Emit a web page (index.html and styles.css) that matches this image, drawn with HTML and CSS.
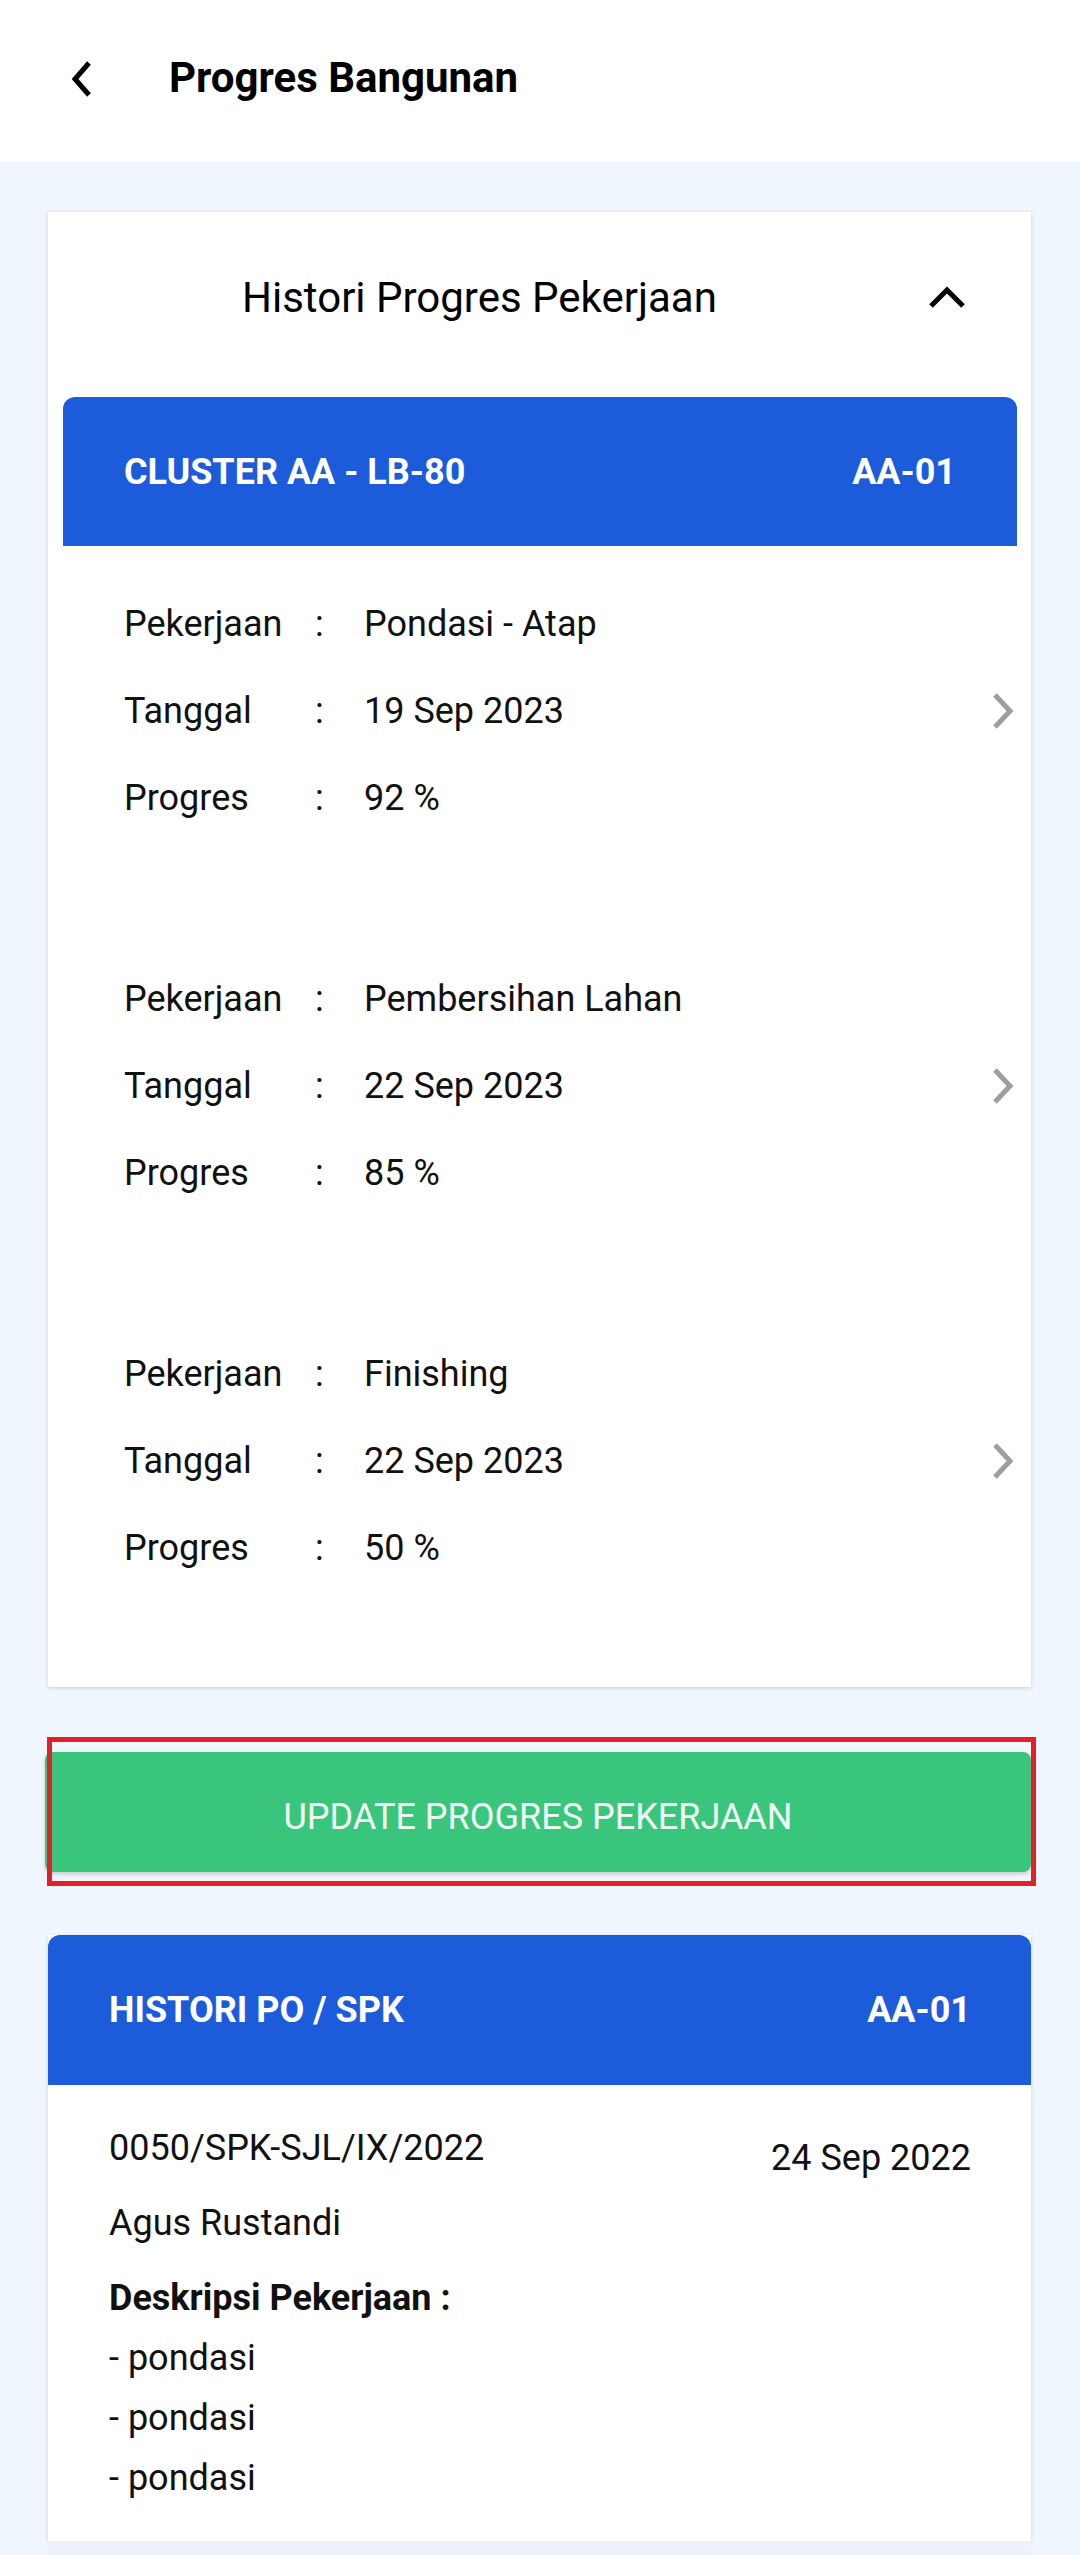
FILE: index.html
```html
<!DOCTYPE html>
<html lang="id">
<head>
<meta charset="utf-8">
<title>Progres Bangunan</title>
<link rel="stylesheet" href="styles.css">
</head>
<body>
<header class="topbar">
  <svg class="back" width="24" height="38" viewBox="0 0 24 38"><path d="M19 3 L5 19 L19 35" fill="none" stroke="#000" stroke-width="5"/></svg>
  <h1 class="page-title">Progres Bangunan</h1>
</header>

<main class="content">
  <section class="card history">
    <div class="history-head">
      <h2 class="history-title">Histori Progres Pekerjaan</h2>
      <svg class="chev-up" width="38" height="24" viewBox="0 0 38 24"><path d="M3 20 L19 4 L35 20" fill="none" stroke="#000" stroke-width="5"/></svg>
    </div>
    <div class="blue-head inset">
      <span>CLUSTER AA - LB-80</span>
      <span>AA-01</span>
    </div>
    <div class="groups">
      <div class="group">
        <div class="rows">
          <span>Pekerjaan</span><span>:</span><span>Pondasi - Atap</span>
          <span>Tanggal</span><span>:</span><span>19 Sep 2023</span>
          <span>Progres</span><span>:</span><span>92 %</span>
        </div>
        <svg class="chev-right" width="24" height="38" viewBox="0 0 24 38"><path d="M4 3 L19 19 L4 35" fill="none" stroke="#9e9e9e" stroke-width="5"/></svg>
      </div>
      <div class="group">
        <div class="rows">
          <span>Pekerjaan</span><span>:</span><span>Pembersihan Lahan</span>
          <span>Tanggal</span><span>:</span><span>22 Sep 2023</span>
          <span>Progres</span><span>:</span><span>85 %</span>
        </div>
        <svg class="chev-right" width="24" height="38" viewBox="0 0 24 38"><path d="M4 3 L19 19 L4 35" fill="none" stroke="#9e9e9e" stroke-width="5"/></svg>
      </div>
      <div class="group">
        <div class="rows">
          <span>Pekerjaan</span><span>:</span><span>Finishing</span>
          <span>Tanggal</span><span>:</span><span>22 Sep 2023</span>
          <span>Progres</span><span>:</span><span>50 %</span>
        </div>
        <svg class="chev-right" width="24" height="38" viewBox="0 0 24 38"><path d="M4 3 L19 19 L4 35" fill="none" stroke="#9e9e9e" stroke-width="5"/></svg>
      </div>
    </div>
  </section>

  <div class="btn-wrap">
    <button class="btn-update">UPDATE PROGRES PEKERJAAN</button>
  </div>

  <section class="card po">
    <div class="blue-head po-head">
      <span>HISTORI PO / SPK</span>
      <span>AA-01</span>
    </div>
    <div class="po-body">
      <div class="po-top">
        <span>0050/SPK-SJL/IX/2022</span>
        <span class="po-date">24 Sep 2022</span>
      </div>
      <div class="po-line gap">Agus Rustandi</div>
      <div class="po-line gap bold">Deskripsi Pekerjaan :</div>
      <div class="po-line">- pondasi</div>
      <div class="po-line">- pondasi</div>
      <div class="po-line">- pondasi</div>
    </div>
  </section>
  <div class="po-tail"></div>
</main>
</body>
</html>
```

FILE: styles.css
```css
* { box-sizing: border-box; }
html, body { margin: 0; padding: 0; }
body {
  width: 1080px;
  min-height: 2555px;
  background: #f0f6fd;
  font-family: Roboto, "Noto Sans", "Liberation Sans", sans-serif;
  color: #111;
}

.topbar {
  height: 162px;
  background: #fff;
  display: flex;
  align-items: center;
  padding-left: 70px;
}
.back { display: block; margin-top: -4px; }
.page-title {
  margin: 0 0 0 75px;
  font-size: 42px;
  font-weight: 700;
  color: #000;
  line-height: 50px;
  margin-top: -6px;
}

.content { padding-top: 50px; }

.card {
  background: #fff;
  margin: 0 49px 0 48px;
  box-shadow: 0 1px 4px rgba(0,0,0,0.16);
}

.history-head {
  height: 185px;
  display: flex;
  align-items: center;
  padding-left: 194px;
  padding-right: 65px;
}
.history-title {
  margin: -14px 0 0 0;
  font-size: 42px;
  font-weight: 400;
  line-height: 48px;
  color: #000;
}
.chev-up { margin-left: auto; margin-top: -14px; display: block; }

.blue-head {
  background: #1c5bd9;
  color: #fff;
  font-weight: 700;
  font-size: 36px;
  display: flex;
  justify-content: space-between;
  align-items: center;
  border-radius: 12px 12px 0 0;
}
.inset {
  margin: 0 14px 0 15px;
  height: 149px;
  padding: 0 61px 0 61px;
}

.groups {
  padding: 34px 16px 96px 76px;
  display: flex;
  flex-direction: column;
  gap: 114px;
}
.group {
  display: flex;
  align-items: center;
}
.rows {
  flex: 1;
  display: grid;
  grid-template-columns: 191px 49px 1fr;
  grid-auto-rows: 87px;
  align-items: center;
  font-size: 36px;
  color: #111;
}
.chev-right { display: block; }

.btn-wrap {
  position: relative;
  margin: 65px 49px 0 45px;
}
.btn-update {
  display: block;
  width: 100%;
  height: 120px;
  border: none;
  border-radius: 8px;
  background: #3ac57c;
  color: #f2fff6;
  font-family: Roboto, "Noto Sans", "Liberation Sans", sans-serif;
  font-size: 36px;
  font-weight: 400;
  box-shadow: 0 2px 4px rgba(0,0,0,0.18);
  padding: 10px 0 0 0;
}
.btn-wrap::after {
  content: "";
  position: absolute;
  left: 2px;
  right: -5px;
  top: -15px;
  bottom: -14px;
  border: 5px solid #e3202a;
  pointer-events: none;
}

.po { margin-top: 63px; }
.po-head {
  height: 150px;
  padding: 0 60px 0 61px;
}
.po-body {
  padding: 33px 60px 33px 61px;
  font-size: 36px;
  color: #111;
}
.po-top {
  display: flex;
  justify-content: space-between;
  line-height: 60px;
}
.po-date { margin-top: 10px; line-height: 60px; }
.po-line { line-height: 60px; }
.po-line.gap { margin-top: 15px; }
.po-top + .po-line.gap { margin-top: 5px; }
.bold { font-weight: 700; }

.po-tail {
  margin: 0 49px 0 48px;
  height: 20px;
  background: #edf2fa;
}
```
